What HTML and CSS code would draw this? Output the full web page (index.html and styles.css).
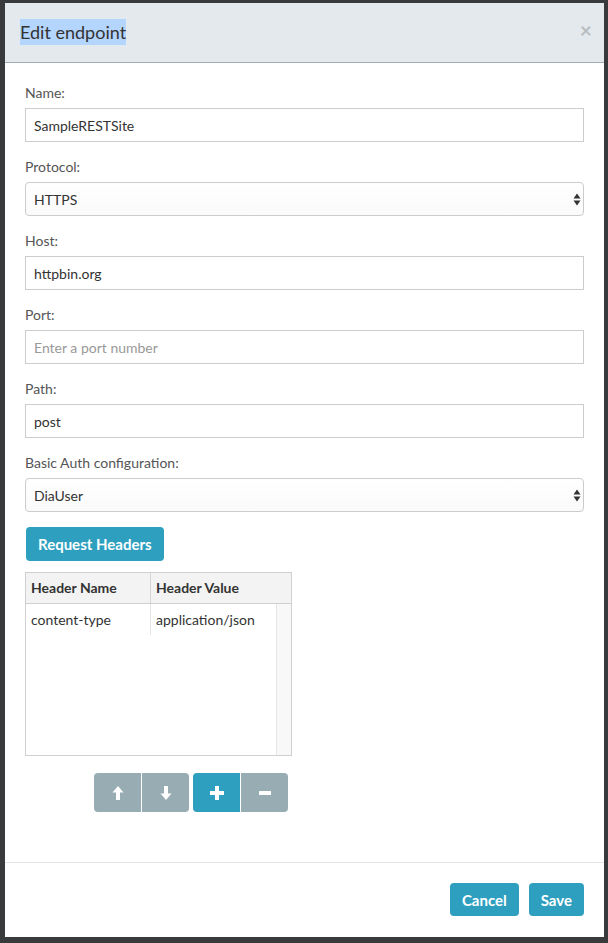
FILE: index.html
```html
<!DOCTYPE html>
<html>
<head>
<meta charset="utf-8">
<link rel="stylesheet" href="styles.css">
</head>
<body>
<div class="modal">
  <div class="modal-header">
    <h4 class="title"><span class="sel">Edit endpoint</span></h4>
    <span class="close">×</span>
  </div>
  <div class="modal-body">
    <div class="group">
      <label class="lbl">Name:</label>
      <input class="control" type="text" value="SampleRESTSite">
    </div>
    <div class="group">
      <label class="lbl">Protocol:</label>
      <div class="select-wrap">
        <select class="control select"><option>HTTPS</option></select>
        <svg class="arrows" width="8" height="13" viewBox="0 0 8 13"><path d="M4 0.5 L7.5 5.5 L0.5 5.5 Z M4 12.5 L7.5 7.5 L0.5 7.5 Z" fill="#333"/></svg>
      </div>
    </div>
    <div class="group">
      <label class="lbl">Host:</label>
      <input class="control" type="text" value="httpbin.org">
    </div>
    <div class="group">
      <label class="lbl">Port:</label>
      <input class="control" type="text" placeholder="Enter a port number">
    </div>
    <div class="group">
      <label class="lbl">Path:</label>
      <input class="control" type="text" value="post">
    </div>
    <div class="group">
      <label class="lbl">Basic Auth configuration:</label>
      <div class="select-wrap">
        <select class="control select"><option>DiaUser</option></select>
        <svg class="arrows" width="8" height="13" viewBox="0 0 8 13"><path d="M4 0.5 L7.5 5.5 L0.5 5.5 Z M4 12.5 L7.5 7.5 L0.5 7.5 Z" fill="#333"/></svg>
      </div>
    </div>
    <button class="btn btn-primary req">Request Headers</button>
    <div class="grid">
      <div class="grid-head">
        <div class="hc c1">Header Name</div>
        <div class="hc c2">Header Value</div>
      </div>
      <div class="grid-body">
        <div class="rows">
          <div class="row">
            <div class="cell c1">content-type</div>
            <div class="cell c2">application/json</div>
          </div>
        </div>
        <div class="scroll"></div>
      </div>
    </div>
    <div class="tools">
      <div class="btn-group">
        <button class="tbtn gray"><svg width="12" height="16" viewBox="0 0 12 16"><path d="M6 1 L11.5 7.5 L8 7.5 L8 15 L4 15 L4 7.5 L0.5 7.5 Z" fill="#fff"/></svg></button>
        <button class="tbtn gray"><svg width="12" height="16" viewBox="0 0 12 16"><path d="M6 15 L11.5 8.5 L8 8.5 L8 1 L4 1 L4 8.5 L0.5 8.5 Z" fill="#fff"/></svg></button>
      </div>
      <div class="btn-group">
        <button class="tbtn blue"><svg width="14" height="14" viewBox="0 0 14 14"><path d="M5 0 H9 V5 H14 V9 H9 V14 H5 V9 H0 V5 H5 Z" fill="#fff"/></svg></button>
        <button class="tbtn gray"><svg width="14" height="14" viewBox="0 0 14 14"><path d="M1 5 H13 V9 H1 Z" fill="#fff"/></svg></button>
      </div>
    </div>
  </div>
  <div class="modal-footer">
    <button class="btn btn-primary">Cancel</button>
    <button class="btn btn-primary">Save</button>
  </div>
</div>
</body>
</html>
```
FILE: styles.css
```css
* { box-sizing: border-box; }
html, body { margin: 0; }
body {
  background: #393a3b;
  font-family: Lato, "Open Sans", sans-serif;
  font-size: 14px;
  color: #333;
  padding: 3px 4px 6px 5px;
}
.modal {
  width: 599px;
  height: 934px;
  background: #fff;
  display: flex;
  flex-direction: column;
}
.modal-header {
  background: #e4e9ed;
  border-bottom: 1px solid #a3abb3;
  height: 60px;
  padding: 15px 15px 0 15px;
  display: flex;
  justify-content: space-between;
  align-items: flex-start;
}
.title {
  margin: 0;
  font-size: 18px;
  font-weight: normal;
  line-height: 29px;
  color: #333;
}
.sel { background: #b4d5fd; padding: 2px 0; }
.close {
  font-size: 21px;
  font-weight: bold;
  color: #b9bcbf;
  line-height: 24px;
  margin-right: -3px;
  margin-top: 0;
}
.modal-body {
  flex: 1;
  padding: 20px 20px;
}
.group { margin-bottom: 15px; }
.lbl {
  display: block;
  line-height: 20px;
  margin-bottom: 5px;
  color: #555;
}
.control {
  display: block;
  width: 100%;
  height: 34px;
  border: 1px solid #ccc;
  padding: 6px 8px;
  font-family: Lato, "Open Sans", sans-serif;
  font-size: 14px;
  color: #333;
  background: #fff;
  border-radius: 0;
  outline: none;
}
.control::placeholder { color: #999; }
.select-wrap { position: relative; }
.select {
  -webkit-appearance: none;
  appearance: none;
  border-radius: 4px;
  background: linear-gradient(#fff, #fafafa);
}
.arrows { position: absolute; right: 3px; top: 11px; }
.btn {
  font-family: Lato, "Open Sans", sans-serif;
  font-size: 15px;
  font-weight: bold;
  line-height: 20px;
  color: #fff;
  border: none;
  border-radius: 4px;
  padding: 6px 12px;
  height: 33px;
}
.btn-primary { background: #2e9fbf; }
.req {
  display: block;
  height: 34px;
  margin-left: 1px;
  margin-bottom: 11px;
}
.grid {
  width: 267px;
  height: 184px;
  border: 1px solid #d0d0d0;
  display: flex;
  flex-direction: column;
}
.grid-head {
  display: flex;
  height: 31px;
  background: #f3f3f3;
  border-bottom: 1px solid #d0d0d0;
}
.hc {
  font-weight: bold;
  line-height: 30px;
  padding-left: 5px;
  color: #333;
}
.c1 { width: 125px; border-right: 1px solid #d6d6d6; }
.c2 { flex: 1; }
.grid-body { flex: 1; display: flex; }
.rows { flex: 1; }
.row { display: flex; height: 31px; }
.cell { line-height: 31px; padding-left: 5px; color: #333; }
.row .c1 { border-right-color: #e3e3e3; }
.scroll {
  width: 15px;
  background: #f8f8f8;
  border-left: 1px solid #e6e6e6;
}
.tools {
  display: flex;
  gap: 4px;
  margin-top: 17px;
  margin-left: 69px;
}
.btn-group { display: flex; }
.tbtn {
  width: 47px;
  height: 39px;
  border: none;
  padding: 0;
  display: flex;
  align-items: center;
  justify-content: center;
}
.tbtn.gray { background: #98adb3; }
.tbtn.blue { background: #2e9fbf; }
.btn-group .tbtn:first-child { border-radius: 4px 0 0 4px; border-right: 1px solid #fff; width: 48px; }
.btn-group .tbtn:last-child { border-radius: 0 4px 4px 0; }
.modal-footer {
  border-top: 1px solid #e5e5e5;
  padding: 20px 20px 21px;
  display: flex;
  justify-content: flex-end;
  gap: 10px;
}
```
